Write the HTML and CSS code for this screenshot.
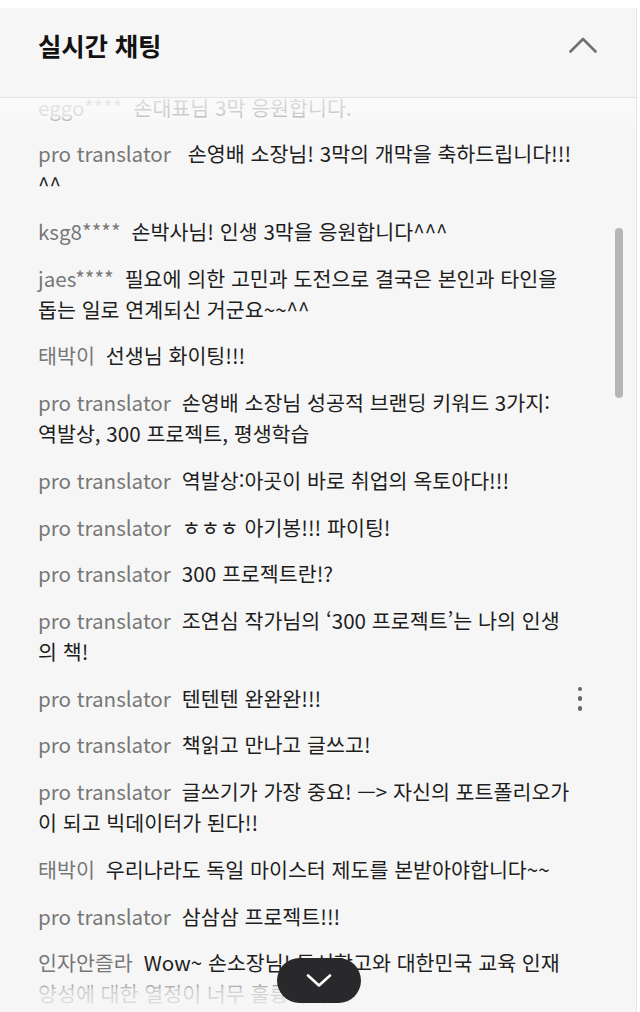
FILE: index.html
```html
<!DOCTYPE html>
<html lang="ko">
<head>
<meta charset="utf-8">
<title>실시간 채팅</title>
<link rel="stylesheet" href="styles.css">
</head>
<body>
<div class="panel">
  <header class="head">
    <h2 class="title">실시간 채팅</h2>
    <button class="toggle" aria-label="접기">
      <svg width="28" height="16" viewBox="0 0 28 16"><path d="M1.5 14.5 L14 2 L26.5 14.5" fill="none" stroke="#707070" stroke-width="2.6" stroke-linecap="round" stroke-linejoin="round"/></svg>
    </button>
  </header>
  <div class="chat">
    <ul class="msgs">
      <li class="msg"><span class="name">eggo****</span><span class="text">손대표님 3막 응원합니다.</span></li>
      <li class="msg"><span class="name name-wide">pro translator</span><span class="text">손영배 소장님! 3막의 개막을 축하드립니다!!! ^^</span></li>
      <li class="msg"><span class="name">ksg8****</span><span class="text">손박사님! 인생 3막을 응원합니다^^^</span></li>
      <li class="msg"><span class="name">jaes****</span><span class="text">필요에 의한 고민과 도전으로 결국은 본인과 타인을 돕는 일로 연계되신 거군요~~^^</span></li>
      <li class="msg"><span class="name">태박이</span><span class="text">선생님 화이팅!!!</span></li>
      <li class="msg"><span class="name">pro translator</span><span class="text">손영배 소장님 성공적 브랜딩 키워드 3가지: 역발상, 300 프로젝트, 평생학습</span></li>
      <li class="msg"><span class="name">pro translator</span><span class="text">역발상:아곳이 바로 취업의 옥토아다!!!</span></li>
      <li class="msg"><span class="name">pro translator</span><span class="text">ㅎㅎㅎ 아기봉!!! 파이팅!</span></li>
      <li class="msg"><span class="name">pro translator</span><span class="text">300 프로젝트란!?</span></li>
      <li class="msg"><span class="name">pro translator</span><span class="text">조연심 작가님의 ‘300 프로젝트’는 나의 인생의 책!</span></li>
      <li class="msg msg-active"><span class="name">pro translator</span><span class="text">텐텐텐 완완완!!!</span>
        <button class="more" aria-label="더보기"><i></i><i></i><i></i></button>
      </li>
      <li class="msg"><span class="name">pro translator</span><span class="text">책읽고 만나고 글쓰고!</span></li>
      <li class="msg"><span class="name">pro translator</span><span class="text">글쓰기가 가장 중요! —&gt; 자신의 포트폴리오가 이 되고 빅데이터가 된다!!</span></li>
      <li class="msg"><span class="name">태박이</span><span class="text">우리나라도 독일 마이스터 제도를 본받아야합니다~~</span></li>
      <li class="msg"><span class="name">pro translator</span><span class="text">삼삼삼 프로젝트!!!</span></li>
      <li class="msg"><span class="name">인자안즐라</span><span class="text">Wow~ 손소장님! 동서학고와 대한민국 교육 인재 양성에 대한 열정이 너무 훌륭하세요.</span></li>
    </ul>
    <div class="fade-top"></div>
    <div class="fade-bottom"></div>
    <div class="thumb"></div>
    <button class="jump" aria-label="최신 채팅으로">
      <svg width="26" height="13" viewBox="0 0 26 13"><path d="M2 1.5 L13 11.5 L24 1.5" fill="none" stroke="#ffffff" stroke-width="2.6" stroke-linecap="round" stroke-linejoin="round"/></svg>
    </button>
  </div>
</div>
</body>
</html>
```

FILE: styles.css
```css
* { box-sizing: border-box; }
html, body { margin: 0; padding: 0; }
body {
  background: #ffffff;
  font-family: "Noto Sans CJK KR", "Noto Sans", sans-serif;
  -webkit-font-smoothing: antialiased;
}
.panel {
  margin-top: 8px;
  width: 637px;
  height: 1004px;
  background: #f6f6f6;
  border-right: 1px solid #e4e4e4;
  display: flex;
  flex-direction: column;
  overflow: hidden;
}
.head {
  flex: 0 0 90px;
  display: flex;
  align-items: center;
  justify-content: space-between;
  padding: 0 39px 16px 38px;
  border-bottom: 1px solid #e3e3e3;
}
.title {
  margin: 0;
  font-size: 25.5px;
  font-weight: 700;
  color: #121212;
  letter-spacing: -0.2px;
  line-height: 34px;
}
.toggle {
  border: 0;
  background: none;
  padding: 0;
  width: 28px;
  height: 16px;
  display: flex;
}
.chat {
  position: relative;
  flex: 1;
  overflow: hidden;
}
.msgs {
  list-style: none;
  margin: -6.5px 0 0;
  padding: 0 62px 0 38px;
  display: flex;
  flex-direction: column;
  gap: 15.73px;
}
.msg {
  position: relative;
  font-size: 20.6px;
  line-height: 31px;
  color: #1e1e1e;
  letter-spacing: 0;
}
.name {
  color: #777777;
  margin-right: 11px;
}
.name-wide { margin-right: 17px; }
.more {
  position: absolute;
  right: -11px;
  top: 4px;
  width: 10px;
  height: 24px;
  border: 0;
  background: none;
  padding: 0;
  display: flex;
  flex-direction: column;
  align-items: center;
  justify-content: space-between;
}
.more i {
  width: 4.5px;
  height: 4.5px;
  border-radius: 50%;
  background: #666666;
}
.fade-top {
  position: absolute;
  left: 0; right: 0; top: 0;
  height: 30px;
  background: linear-gradient(to bottom, rgba(250,250,250,0.88) 0%, rgba(250,250,250,0.78) 60%, rgba(246,246,246,0) 100%);
}
.fade-bottom {
  position: absolute;
  left: 0; right: 0; bottom: 0;
  height: 38px;
  background: linear-gradient(to bottom, rgba(246,246,246,0) 0%, rgba(246,246,246,0.82) 40%, rgba(246,246,246,0.92) 100%);
}
.thumb {
  position: absolute;
  left: 615px;
  top: 130px;
  width: 8px;
  height: 170px;
  border-radius: 4px;
  background: #b5b5b5;
}
.jump {
  position: absolute;
  left: 277px;
  top: 860px;
  width: 84px;
  height: 45px;
  border: 0;
  border-radius: 23px;
  background: #29292b;
  display: flex;
  align-items: center;
  justify-content: center;
  padding: 0;
}
```
